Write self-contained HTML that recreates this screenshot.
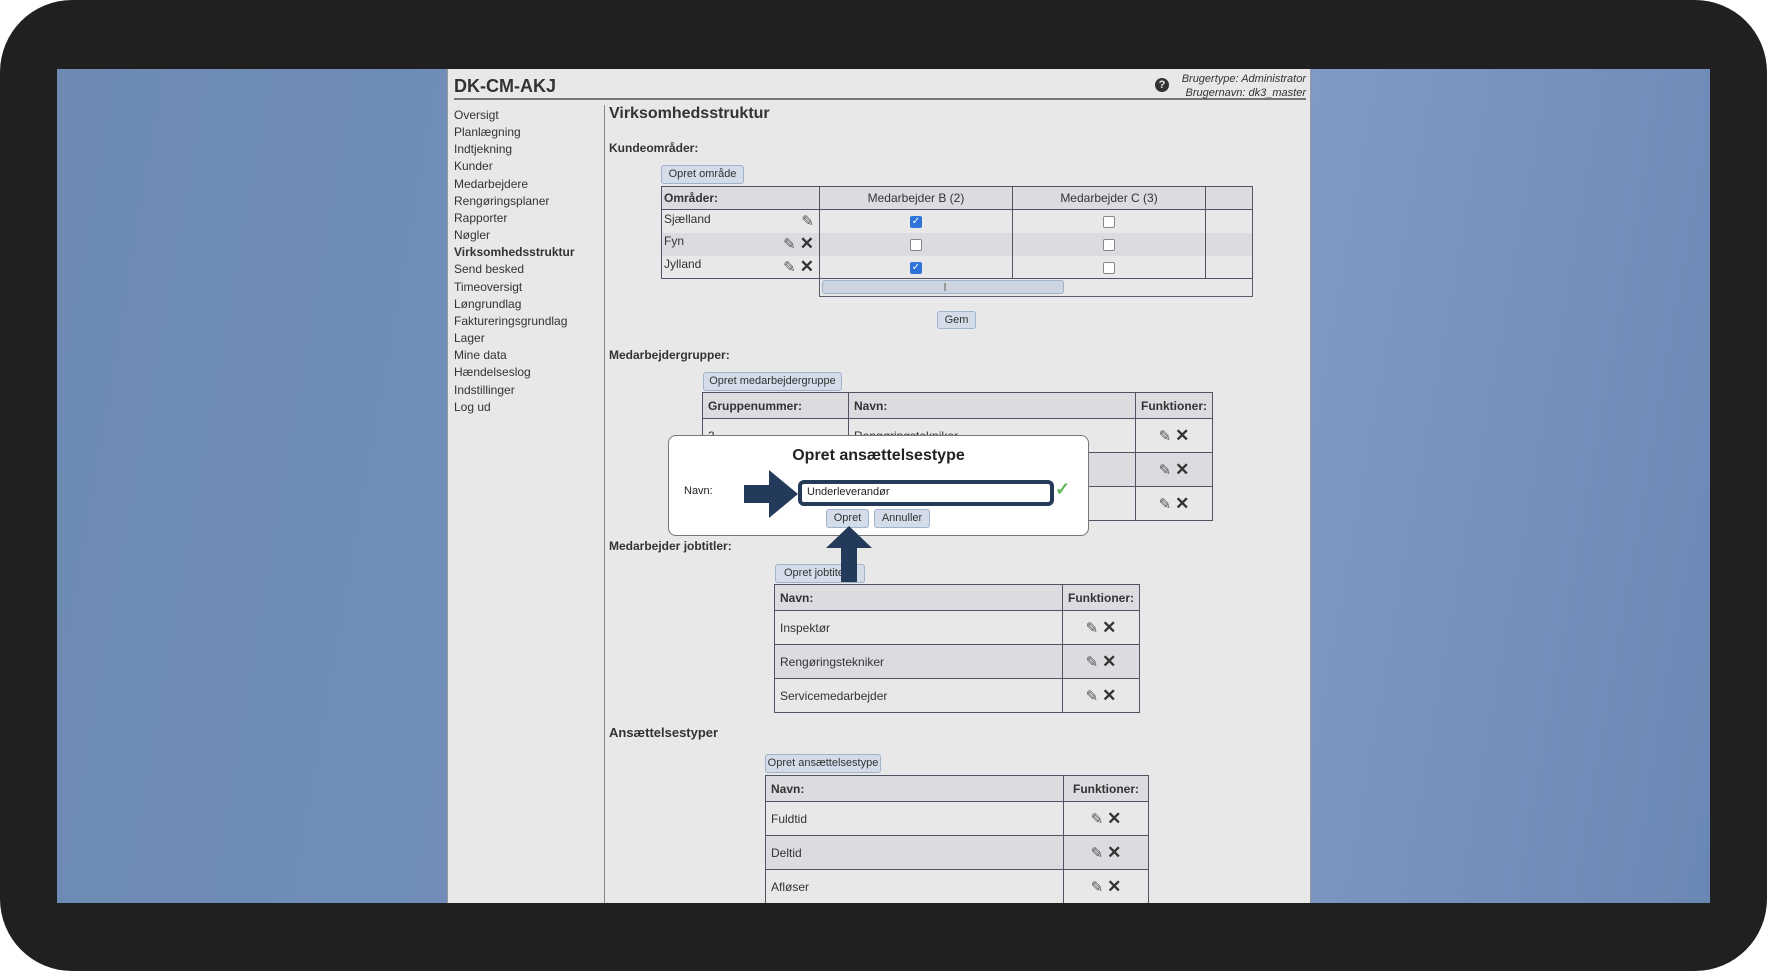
<!DOCTYPE html>
<html><head><meta charset="utf-8"><style>
*{box-sizing:border-box;margin:0;padding:0}
body{width:1767px;height:971px;background:#fff;overflow:hidden;font-family:"Liberation Sans",Arial,sans-serif;position:relative;color:#333}
.frame{position:absolute;left:0;top:0;width:1767px;height:971px;background:#212021;border-radius:72px}
.desk{position:absolute;left:57px;top:69px;width:1653px;height:834px;background:linear-gradient(100deg,#6c8ab2 0%,#7190bb 40%,#7d9bc4 70%,#6a88b3 100%);overflow:hidden}
.page{position:absolute;left:447px;top:69px;width:864px;height:834px;background:#e8e8e8;border-left:1px solid #999;border-right:1px solid #999}
.a{position:absolute;white-space:nowrap}
.nav{left:454px;font-size:12px;color:#333}
.btn{position:absolute;background:#d3dce8;border:1px solid #9fb3cc;border-radius:3px;font-size:11px;color:#333;text-align:center;line-height:17px}
table{position:absolute;border-collapse:collapse;font-size:12px;color:#333}
td,th{border:1.5px solid #4f5565;padding:0 5px;text-align:left}
th{background:#dcdce0;font-weight:bold}
tr.g td{background:#dcdce0}
.fn{text-align:center}
.x{font-weight:bold;font-size:17px;color:#333;margin-left:4px}
.p{display:inline-block;font-size:15px;color:#555}
.cb{display:inline-block;width:12px;height:12px;border:1px solid #888;border-radius:2px;background:#fff;vertical-align:middle}
.cb.on{background:#2d74d9;border-color:#2d74d9;color:#fff;font-size:10px;line-height:10px;text-align:center}
h4{font-size:12px;font-weight:bold;color:#333}
</style></head><body>
<div class="frame"></div>
<div class="desk"></div>
<div class="page"></div>
<div class="a" style="left:454px;top:76px;font-size:18px;font-weight:bold;color:#333">DK-CM-AKJ</div>
<div class="a" style="left:454px;top:98px;width:852px;height:2px;background:#777"></div>
<div class="a" style="left:1155px;top:78px;width:14px;height:14px;border-radius:50%;background:#333;color:#e8e8e8;font-size:11px;font-weight:bold;text-align:center;line-height:14px">?</div>
<div class="a" style="right:461px;top:72px;font-size:11px;font-style:italic;text-align:right;line-height:14px;color:#333">Brugertype: Administrator<br>Brugernavn: dk3_master</div>
<div class="a" style="left:604px;top:105px;width:1px;height:798px;background:#888"></div>

<div class="a nav" style="top:107px;line-height:17.15px">Oversigt<br>Planlægning<br>Indtjekning<br>Kunder<br>Medarbejdere<br>Rengøringsplaner<br>Rapporter<br>Nøgler<br><b>Virksomhedsstruktur</b><br>Send besked<br>Timeoversigt<br>Løngrundlag<br>Faktureringsgrundlag<br>Lager<br>Mine data<br>Hændelseslog<br>Indstillinger<br>Log ud</div>

<div class="a" style="left:609px;top:105px;font-size:16px;font-weight:bold">Virksomhedsstruktur</div>
<h4 class="a" style="left:609px;top:141px">Kundeområder:</h4>
<div class="btn" style="left:661px;top:165px;width:83px;height:19px">Opret område</div>
<table style="left:661px;top:186px;width:592px">
<tr style="height:23px"><th style="width:158px;padding-left:2px">Områder:</th><th style="width:193px;text-align:center;font-weight:normal">Medarbejder B (2)</th><th style="width:193px;text-align:center;font-weight:normal">Medarbejder C (3)</th><th></th></tr>
<tr style="height:23px"><td style="border-bottom:none;border-top:none;padding-left:2px">Sjælland<span style="float:right" class="p">✎</span></td><td class="fn" style="border-bottom:none"><span class="cb on">✓</span></td><td class="fn" style="border-bottom:none"><span class="cb"></span></td><td style="border-bottom:none"></td></tr>
<tr class="g" style="height:23px"><td style="border:none;border-left:1.5px solid #4f5565;border-right:1.5px solid #4f5565;padding-left:2px">Fyn<span style="float:right"><span class="p">✎</span><span class="x">✕</span></span></td><td class="fn" style="border-top:none;border-bottom:none"><span class="cb"></span></td><td class="fn" style="border-top:none;border-bottom:none"><span class="cb"></span></td><td style="border-top:none;border-bottom:none"></td></tr>
<tr style="height:23px"><td style="border-top:none;padding-left:2px">Jylland<span style="float:right"><span class="p">✎</span><span class="x">✕</span></span></td><td class="fn" style="border-top:none"><span class="cb on">✓</span></td><td class="fn" style="border-top:none"><span class="cb"></span></td><td style="border-top:none"></td></tr>
</table>
<div class="a" style="left:819px;top:278px;width:434px;height:19px;border:1px solid #5a6070;border-top:none"></div>
<div class="a" style="left:822px;top:280px;width:242px;height:14px;background:#ccd5e0;border:1px solid #9fb3cc;border-radius:3px"></div>
<div class="a" style="left:944px;top:283px;width:2px;height:8px;background:#999"></div>
<div class="btn" style="left:937px;top:311px;width:39px;height:18px">Gem</div>

<h4 class="a" style="left:609px;top:348px">Medarbejdergrupper:</h4>
<div class="btn" style="left:703px;top:372px;width:139px;height:19px">Opret medarbejdergruppe</div>
<table style="left:702px;top:392px;width:511px">
<tr style="height:26px"><th style="width:146px">Gruppenummer:</th><th>Navn:</th><th style="width:76px;text-align:center">Funktioner:</th></tr>
<tr style="height:34px"><td>3</td><td>Rengøringstekniker</td><td class="fn"><span class="p">✎</span><span class="x">✕</span></td></tr>
<tr class="g" style="height:34px"><td></td><td></td><td class="fn"><span class="p">✎</span><span class="x">✕</span></td></tr>
<tr style="height:34px"><td></td><td></td><td class="fn"><span class="p">✎</span><span class="x">✕</span></td></tr>
</table>

<h4 class="a" style="left:609px;top:539px">Medarbejder jobtitler:</h4>
<div class="btn" style="left:775px;top:564px;width:90px;height:19px;text-align:left;padding-left:8px">Opret jobtitel</div>
<table style="left:774px;top:584px;width:366px">
<tr style="height:26px"><th>Navn:</th><th style="width:77px;text-align:center">Funktioner:</th></tr>
<tr style="height:34px"><td>Inspektør</td><td class="fn"><span class="p">✎</span><span class="x">✕</span></td></tr>
<tr class="g" style="height:34px"><td>Rengøringstekniker</td><td class="fn"><span class="p">✎</span><span class="x">✕</span></td></tr>
<tr style="height:34px"><td>Servicemedarbejder</td><td class="fn"><span class="p">✎</span><span class="x">✕</span></td></tr>
</table>

<div class="a" style="left:609px;top:725px;font-size:13px;font-weight:bold">Ansættelsestyper</div>
<div class="btn" style="left:765px;top:754px;width:116px;height:19px">Opret ansættelsestype</div>
<div class="a" style="left:765px;top:775px;width:384px;height:128px;overflow:hidden">
<table style="left:0;top:0;width:384px">
<tr style="height:26px"><th>Navn:</th><th style="width:85px;text-align:center">Funktioner:</th></tr>
<tr style="height:34px"><td>Fuldtid</td><td class="fn"><span class="p">✎</span><span class="x">✕</span></td></tr>
<tr class="g" style="height:34px"><td>Deltid</td><td class="fn"><span class="p">✎</span><span class="x">✕</span></td></tr>
<tr style="height:34px"><td>Afløser</td><td class="fn"><span class="p">✎</span><span class="x">✕</span></td></tr>
<tr style="height:34px"><td></td><td></td></tr>
</table></div>

<!-- modal -->
<div class="a" style="left:668px;top:435px;width:421px;height:101px;background:#fff;border:1px solid #777;border-radius:8px"></div>
<div class="a" style="left:668px;top:447px;width:421px;text-align:center;font-size:16px;font-weight:bold;color:#222">Opret ansættelsestype</div>
<div class="a" style="left:684px;top:485px;font-size:11px;color:#222">Navn:</div>
<div class="a" style="left:798px;top:480px;width:256px;height:26px;border:4px solid #253a58;border-radius:6px;background:#fff;font-size:11px;color:#222;padding:2px 5px">Underleverandør</div>
<div class="a" style="left:1055px;top:479px;font-size:18px;color:#5cb85c;font-weight:bold">✓</div>
<div class="btn" style="left:826px;top:509px;width:43px;height:19px;font-size:11px">Opret</div>
<div class="btn" style="left:874px;top:509px;width:56px;height:19px;font-size:11px">Annuller</div>
<svg class="a" style="left:740px;top:468px" width="62" height="52"><polygon points="4,17 29,17 29,2 58,26 29,50 29,35 4,35" fill="#243a5a"/></svg>
<svg class="a" style="left:824px;top:524px" width="50" height="60"><polygon points="25,2 48,24 33,24 33,58 17,58 17,24 2,24" fill="#243a5a"/></svg>
</body></html>
